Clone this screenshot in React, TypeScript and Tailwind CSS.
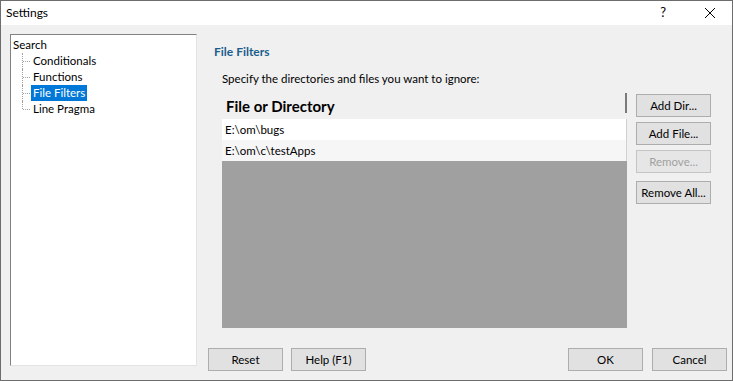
import React from "react";

const font = { fontFamily: 'Lato, "Noto Sans", sans-serif' };

function Btn({ children, disabled, className = "" }: { children: React.ReactNode; disabled?: boolean; className?: string }) {
  return (
    <div
      className={`h-[23px] w-[75px] flex items-center justify-center border text-[11.5px] leading-none ${disabled ? "text-[#a0a0a0] border-[#c4c4c4] bg-[#e6e6e6]" : "text-black border-[#adadad] bg-[#e1e1e1]"} ${className}`}
    >
      {children}
    </div>
  );
}

function TreeItem({ label, selected, last }: { label: string; selected?: boolean; last?: boolean }) {
  return (
    <div className="relative h-[16px] flex items-center pl-[18px]">
      <div className={`absolute left-[9px] top-0 w-0 border-l border-dotted border-[#a0a0a0] ${last ? "h-[8px]" : "h-[16px]"}`} />
      <div className="absolute left-[10px] top-[8px] w-[7px] h-0 border-t border-dotted border-[#a0a0a0]" />
      <span className={`px-[2px] h-[16px] flex items-center ${selected ? "bg-[#0078d7] text-white" : "text-black"}`}>{label}</span>
    </div>
  );
}

export default function App() {
  return (
    <div style={font} className="w-[733px] h-[381px] bg-[#f0f0f0] border border-[#6d6d6d] flex flex-col text-[11.5px] text-black overflow-hidden">
      <div className="h-[24px] bg-white flex items-center shrink-0">
        <span className="pl-[5px] text-[12px]">Settings</span>
        <div className="flex-1" />
        <span className="text-[13px] mr-[38px]">?</span>
        <svg width="12" height="12" viewBox="0 0 12 12" className="mr-[16px]">
          <path d="M1 1 L11 11 M11 1 L1 11" stroke="#000" strokeWidth="1" />
        </svg>
      </div>
      <div className="flex flex-1 pl-[9px] pt-[9px]">
        <div className="w-[187px] h-[332px] bg-white border-l border-t border-[#828282] border-r border-b border-r-[#e3e3e3] border-b-[#e3e3e3] pt-[2px] pl-[2px]">
          <div className="h-[16px] flex items-center">Search</div>
          <TreeItem label="Conditionals" />
          <TreeItem label="Functions" />
          <TreeItem label="File Filters" selected />
          <TreeItem label="Line Pragma" last />
        </div>
        <div className="ml-[11px] flex flex-col">
          <div className="pl-[6px] pt-[9px] h-[33px] font-bold text-[#1b5e8c] text-[12px]">File Filters</div>
          <div className="pl-[14px] h-[26px] pt-[3px]">Specify the directories and files you want to ignore:</div>
          <div className="flex ml-[14px]">
            <div className="w-[405px] h-[235px] bg-[#a0a0a0] flex flex-col">
              <div className="h-[26px] bg-[#f0f0f0] flex items-center pl-[4px] font-bold text-[15px] relative">
                File or Directory
                <div className="absolute right-0 top-0 h-[20px] w-[2px] bg-[#7a7a7a]" />
              </div>
              <div className="h-[21px] bg-white flex items-center pl-[3px] border-r border-[#d0d0d0]">E:\om\bugs</div>
              <div className="h-[21px] bg-[#f6f6f6] flex items-center pl-[3px] border-r border-[#d0d0d0]">E:\om\c\testApps</div>
            </div>
            <div className="ml-[9px] flex flex-col pt-[1px]">
              <Btn>Add Dir...</Btn>
              <Btn className="mt-[5px]">Add File...</Btn>
              <Btn disabled className="mt-[5px]">Remove...</Btn>
              <Btn className="mt-[8px]">Remove All...</Btn>
            </div>
          </div>
          <div className="flex mt-[20px]">
            <Btn>Reset</Btn>
            <Btn className="ml-[8px]">Help (F1)</Btn>
            <Btn className="ml-[202px]">OK</Btn>
            <Btn className="ml-[9px]">Cancel</Btn>
          </div>
        </div>
      </div>
    </div>
  );
}
